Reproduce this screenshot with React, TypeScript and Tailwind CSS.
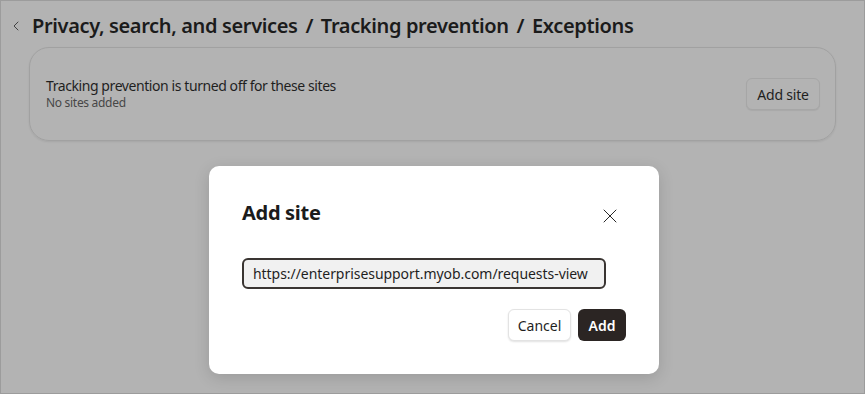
import { ChevronLeft, X } from 'lucide-react';

export default function App() {
  return (
    <div
      className="relative w-[865px] h-[394px] overflow-hidden bg-[#b3b3b3] border border-[#9c9c9c]"
      style={{ fontFamily: '"Noto Sans", "Open Sans", sans-serif' }}
    >
      {/* Page behind the overlay */}
      <div className="flex items-center pl-[7px] pt-[12px] h-[38px]">
        <ChevronLeft size={16} strokeWidth={1.2} className="text-[#262626]" />
        <h1 className="ml-[8px] text-[20px] font-semibold text-[#1b1b1b] tracking-[-0.36px]">
          Privacy, search, and services <span className="mx-[3px]">/</span> Tracking prevention{' '}
          <span className="mx-[3px]">/</span> Exceptions
        </h1>
      </div>

      <div className="mx-[28px] mt-[8px] h-[94px] rounded-[20px] border border-[#a1a1a1] shadow-[0_1px_2px_rgba(0,0,0,0.08)] flex items-center justify-between pl-[16px] pr-[15px]">
        <div className="flex flex-col">
          <span className="text-[14px] leading-[18px] text-[#1f1f1f] tracking-[-0.42px]">
            Tracking prevention is turned off for these sites
          </span>
          <span className="text-[12px] leading-[16px] text-[#474747] tracking-[-0.3px]">No sites added</span>
        </div>
        <button className="h-[32px] w-[74px] rounded-[6px] border border-[#a6a6a6] bg-[#b3b3b3] text-[14px] text-[#1f1f1f] tracking-[-0.2px] shadow-[0_1px_1px_rgba(0,0,0,0.06)]">
          Add site
        </button>
      </div>

      {/* Dialog */}
      <div className="absolute left-[208px] top-[165px] w-[450px] h-[208px] rounded-[10px] bg-white shadow-[0_4px_16px_rgba(0,0,0,0.14)] px-[33px] pt-[34px]">
        <div className="flex items-start justify-between">
          <h2 className="text-[20px] font-bold text-[#1b1b1b] leading-[26px] tracking-[-0.3px]">Add site</h2>
          <button className="mt-[4px] mr-[4px] text-[#262626]">
            <X size={24} strokeWidth={1} />
          </button>
        </div>
        <div className="mt-[30px] w-[364px] h-[31px] rounded-[6px] border-2 border-[#3a3532] bg-[#f1f1f1] flex items-center pl-[9px]">
          <span className="text-[14px] text-[#1f1f1f] tracking-[-0.05px]">https://enterprisesupport.myob.com/requests-view</span>
        </div>
        <div className="mt-[20px] flex justify-end gap-[7px]">
          <button className="h-[32px] w-[63px] rounded-[6px] bg-white border border-[#e3e3e3] shadow-[0_1px_2px_rgba(0,0,0,0.12)] text-[14px] text-[#1f1f1f]">
            Cancel
          </button>
          <button className="h-[32px] w-[48px] rounded-[6px] bg-[#2b2523] text-[14px] text-white font-semibold">
            Add
          </button>
        </div>
      </div>
    </div>
  );
}
